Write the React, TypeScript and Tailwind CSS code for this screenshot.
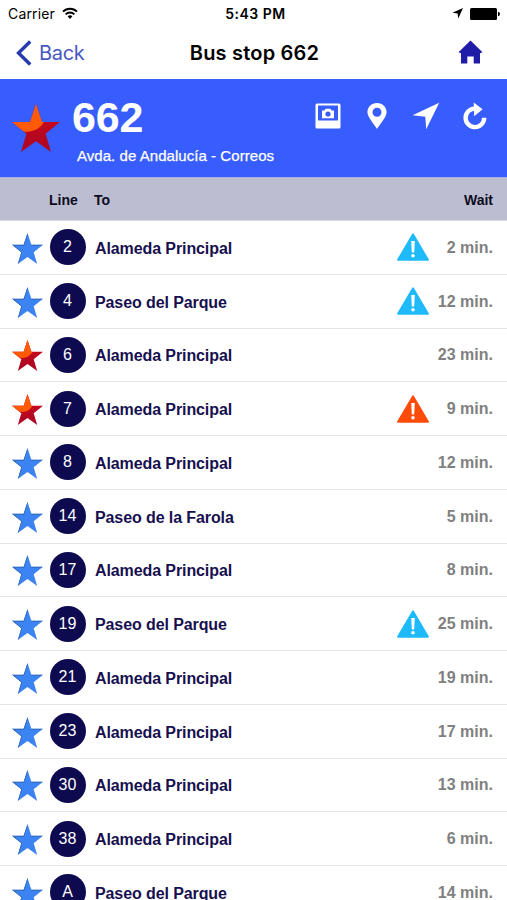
import React from 'react';

type StarColor = 'blue' | 'red';

interface Arrival {
  line: string;
  to: string;
  wait: number;
  color: StarColor;
  alert?: 'info' | 'warning';
}

const arrivals: Arrival[] = [
  { line: '2', to: 'Alameda Principal', wait: 2, color: 'blue', alert: 'info' },
  { line: '4', to: 'Paseo del Parque', wait: 12, color: 'blue', alert: 'info' },
  { line: '6', to: 'Alameda Principal', wait: 23, color: 'red' },
  { line: '7', to: 'Alameda Principal', wait: 9, color: 'red', alert: 'warning' },
  { line: '8', to: 'Alameda Principal', wait: 12, color: 'blue' },
  { line: '14', to: 'Paseo de la Farola', wait: 5, color: 'blue' },
  { line: '17', to: 'Alameda Principal', wait: 8, color: 'blue' },
  { line: '19', to: 'Paseo del Parque', wait: 25, color: 'blue', alert: 'info' },
  { line: '21', to: 'Alameda Principal', wait: 19, color: 'blue' },
  { line: '23', to: 'Alameda Principal', wait: 17, color: 'blue' },
  { line: '30', to: 'Alameda Principal', wait: 13, color: 'blue' },
  { line: '38', to: 'Alameda Principal', wait: 6, color: 'blue' },
  { line: 'A', to: 'Paseo del Parque', wait: 14, color: 'blue' },
];

const STAR = 'M24 0 L30 18 L48 18 L33.6 29.8 L39 48 L24 37.2 L9 48 L14.4 29.8 L0 18 L18 18 Z';

const Star: React.FC<{ color: StarColor; className: string }> = ({ color, className }) => {
  const id = React.useId();
  return (
    <svg viewBox="0 0 48 48" className={className}>
      <defs>
        <clipPath id={`${id}c`}>
          <path d={STAR} />
        </clipPath>
        <linearGradient id={`${id}g`} x1="0" y1="0" x2="0" y2="1">
          <stop offset="0" stopColor={color === 'red' ? '#d3081b' : '#3b86f5'} />
          <stop offset="1" stopColor={color === 'red' ? '#a90724' : '#3c82f0'} />
        </linearGradient>
      </defs>
      <path d={STAR} fill={`url(#${id}g)`} />
      {color === 'red' ? (
        <path d="M-2 -2 H32 V18 C28 24 24 27 14 28 L-2 24 Z" fill="#ff5a08" clipPath={`url(#${id}c)`} />
      ) : (
        <path
          d="M24 1 L18 18.6 H1 L14.4 29.8 L9.5 47 M30 18.6 H47"
          fill="none"
          stroke="#3568b4"
          strokeWidth="2"
          clipPath={`url(#${id}c)`}
        />
      )}
    </svg>
  );
};

const AlertIcon: React.FC<{ type: 'info' | 'warning' }> = ({ type }) => (
  <svg viewBox="0 0 32 28" className="h-7 w-8">
    <path
      d="M16 1.2 L31 26.8 H1 Z"
      className={type === 'info' ? 'fill-[#1ebafa] stroke-[#1ebafa]' : 'fill-[#ff4b0a] stroke-[#ff4b0a]'}
      strokeWidth="1.8"
      strokeLinejoin="round"
    />
    <path d="M14.2 8 h3.6 l-.6 11.5 h-2.4 Z" fill="#fff" />
    <circle cx="16" cy="22.7" r="1.8" fill="#fff" />
  </svg>
);

const StatusBar = () => (
  <div className="flex h-[27px] shrink-0 items-center pl-2 pr-[7px] font-['Inter',sans-serif] text-black">
    <div className="flex flex-1 items-center gap-[7px]">
      <span className="text-[14px] tracking-[0.15px]">Carrier</span>
      <svg viewBox="0 0 16 12" className="h-3 w-4 -translate-y-px" fill="none" stroke="#000" strokeWidth="1.8">
        <path d="M1 4.6 A10 10 0 0 1 15 4.6" />
        <path d="M3.6 7.3 A6.3 6.3 0 0 1 12.4 7.3" />
        <path d="M8 12 L5.6 9.3 A3.6 3.6 0 0 1 10.4 9.3 Z" fill="#000" stroke="none" />
      </svg>
    </div>
    <span className="pl-[3px] text-[14px] font-semibold tracking-[0.5px]">5:43 PM</span>
    <div className="flex flex-1 items-center justify-end gap-[7px]">
      <svg viewBox="0 0 11 11" className="h-[11px] w-[11px]">
        <path d="M11 0 L6.3 10.5 L5.6 5.4 L0.4 4.8 Z" />
      </svg>
      <svg viewBox="0 0 30 12" className="h-3 w-[30px]">
        <rect width="27" height="12" rx="1.5" />
        <path d="M28 3.7 Q30 4.2 30 6 T28 8.3 Z" />
      </svg>
    </div>
  </div>
);

const NavBar = () => (
  <div className="flex h-[52px] shrink-0 items-center px-4 font-['Inter',sans-serif]">
    <button className="flex flex-1 items-center gap-[7px] text-[#4858c0]">
      <svg viewBox="0 0 16 26" className="h-[26px] w-4">
        <path d="M14.2 1.5 L2.5 13 L14.2 24.5" fill="none" stroke="#263cae" strokeWidth="3.4" />
      </svg>
      <span className="text-[20px] tracking-[-0.3px]">Back</span>
    </button>
    <h1 className="pl-[2px] text-[20px] font-semibold tracking-[0.2px] text-black">Bus stop 662</h1>
    <div className="flex flex-1 justify-end">
      <svg viewBox="0 0 25 24" className="mr-2 h-6 w-[25px] -translate-y-px">
        <path d="M12.5 0.5 L24.5 12.2 L22 13.2 V23.5 H15.7 V16.5 H9.3 V23.5 H3 V13.2 L0.5 12.2 Z" fill="#211ca8" />
      </svg>
    </div>
  </div>
);

const StopHeader = () => (
  <header className="flex h-[98px] shrink-0 items-start bg-[#375dfe] pl-3 text-white">
    <Star color="red" className="mt-[25px] h-12 w-12" />
    <div className="ml-3 flex-1">
      <div className="mt-[14px] text-[43px] font-bold leading-[48px] tracking-[-0.2px]">662</div>
      <div className="mt-[5px] pl-[5px] text-[15px] leading-5 tracking-[0.05px] [-webkit-text-stroke:0.25px_white]">
        Avda. de Andalucía - Correos
      </div>
    </div>
    <div className="mr-5 mt-[17px] flex h-[40px] items-center">
      <svg viewBox="0 0 26 26" className="h-[26px] w-[26px]">
        <path
          fillRule="evenodd"
          fill="#fff"
          d="M2 .5 H24 Q25.5 .5 25.5 2 V24 Q25.5 25.5 24 25.5 H2 Q.5 25.5 .5 24 V2 Q.5 .5 2 .5 Z M3 2.6 V17.5 H23 V2.6 Z"
        />
        <path
          fillRule="evenodd"
          fill="#fff"
          d="M7 7.5 H9.5 L10.5 5.8 H15.5 L16.5 7.5 H19 V15.3 H7 Z M13 8.4 A2.6 2.6 0 1 0 13 13.6 A2.6 2.6 0 1 0 13 8.4 Z"
        />
      </svg>
      <svg viewBox="0 0 20 26" className="ml-[26px] h-[26px] w-5">
        <path
          fillRule="evenodd"
          fill="#fff"
          d="M10 0 C15.5 0 19.6 4.2 19.6 9.3 C19.6 14 13 21 10 26 C7 21 .4 14 .4 9.3 C.4 4.2 4.5 0 10 0 Z M10 4.8 A4.5 4.5 0 1 0 10 13.8 A4.5 4.5 0 1 0 10 4.8 Z"
        />
      </svg>
      <svg viewBox="0 0 28 28" className="ml-[25px] h-7 w-7">
        <path d="M27.2 .8 L14.2 27.2 L13.3 14.8 L.6 13.2 Z" fill="#fff" />
      </svg>
      <svg viewBox="0 0 24 28" className="ml-[23px] h-7 w-6">
        <path d="M13 6.6 A9.3 9.3 0 1 0 21.2 15.8" fill="none" stroke="#fff" strokeWidth="4.4" />
        <path d="M10.7 .5 L19.6 7.2 L11.2 14.3 Z" fill="#fff" />
      </svg>
    </div>
  </header>
);

const ArrivalRow: React.FC<{ arrival: Arrival }> = ({ arrival }) => (
  <li className="flex h-[53.75px] shrink-0 items-center border-b border-[#e4e4e8] pl-3 pr-[14px]">
    <Star color={arrival.color} className="h-[31px] w-[31px] translate-y-px" />
    <span className="ml-[6.5px] flex h-9 w-9 items-center justify-center rounded-full bg-[#0d0a4f] text-[16px] text-white">
      {arrival.line}
    </span>
    <span className="ml-[9.5px] flex-1 pt-[3px] text-[16px] font-bold tracking-[-0.1px] text-[#17104f]">
      {arrival.to}
    </span>
    {arrival.alert && <AlertIcon type={arrival.alert} />}
    <span className="w-16 pt-px text-right text-[16px] font-bold text-[#808080]">{arrival.wait} min.</span>
  </li>
);

export default function App() {
  return (
    <div className="flex h-[900px] w-[507px] flex-col overflow-hidden bg-white font-['Liberation_Sans',Arial,sans-serif]">
      <StatusBar />
      <NavBar />
      <StopHeader />
      <div className="flex h-11 shrink-0 items-center border-b border-t border-b-[#d6d6e4] border-t-[#a9b0de] bg-[#bdbdd2] pl-[49px] pr-[14px] pt-[3px] text-[14px] font-bold text-[#0c0c20]">
        <span className="w-[45px]">Line</span>
        <span className="flex-1">To</span>
        <span>Wait</span>
      </div>
      <ul className="flex flex-col">
        {arrivals.map(arrival => (
          <ArrivalRow key={arrival.line} arrival={arrival} />
        ))}
      </ul>
    </div>
  );
}
